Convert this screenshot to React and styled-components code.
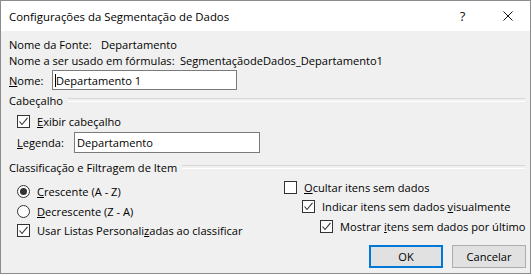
import React from "react";
import styled, { createGlobalStyle } from "styled-components";

const Global = createGlobalStyle`
  html, body { margin: 0; padding: 0; background: #ffffff; }
  body { font-family: "Open Sans", "Noto Sans", sans-serif; }
  * { box-sizing: border-box; }
`;

const Dialog = styled.div`
  width: 531px;
  height: 274px;
  border: 1px solid #8c8c8c;
  background: #f0f0f0;
  display: flex;
  flex-direction: column;
  font-family: "Open Sans", "Noto Sans", sans-serif;
  font-size: 11.1px;
  color: #000;
`;

const TitleBar = styled.div`
  height: 30px;
  background: #ffffff;
  display: flex;
  align-items: center;
  flex-shrink: 0;
`;

const Title = styled.div`
  flex: 1;
  padding-left: 8px;
  font-size: 11.4px;
  color: #000;
`;

const TitleButton = styled.div`
  width: 45px;
  height: 30px;
  display: flex;
  align-items: center;
  justify-content: center;
  font-size: 13px;
  color: #111;
`;

const Body = styled.div`
  flex: 1;
  padding: 5px 5px 0 8px;
  display: flex;
  flex-direction: column;
`;

const Row = styled.div`
  display: flex;
  align-items: center;
  height: ${(p) => p.$h || 16}px;
  margin-top: ${(p) => p.$mt || 0}px;
  padding-left: ${(p) => p.$indent || 0}px;
  white-space: nowrap;
`;

const Label = styled.span`
  display: inline-block;
  width: ${(p) => (p.$w ? `${p.$w}px` : "auto")};
  flex-shrink: 0;
`;

const Input = styled.div`
  width: ${(p) => p.$w}px;
  height: ${(p) => p.$h || 20}px;
  border: 1px solid #7a7a7a;
  background: #ffffff;
  display: flex;
  align-items: center;
  padding-left: 2px;
`;

const Caret = styled.span`
  display: inline-block;
  width: 1px;
  height: 13px;
  background: #000;
`;

const Section = styled.div`
  display: flex;
  align-items: center;
  height: 16px;
  margin-top: ${(p) => p.$mt || 0}px;
  white-space: nowrap;
  &::after {
    content: "";
    flex: 1;
    margin-left: 5px;
    height: 2px;
    border-top: 1px solid #d7d7d7;
    border-bottom: 1px solid #ffffff;
  }
`;

const Columns = styled.div`
  display: flex;
  flex: 1;
`;

const LeftCol = styled.div`
  width: 275px;
  flex-shrink: 0;
  display: flex;
  flex-direction: column;
`;

const RightCol = styled.div`
  flex: 1;
  min-width: 0;
  display: flex;
  flex-direction: column;
`;

const Box = styled.span`
  width: 13px;
  height: 13px;
  border: 1px solid #333333;
  background: #ffffff;
  display: inline-flex;
  align-items: center;
  justify-content: center;
  flex-shrink: 0;
  margin-right: 7px;
  border-radius: ${(p) => (p.$round ? "50%" : "0")};
`;

const Dot = styled.span`
  width: 7px;
  height: 7px;
  border-radius: 50%;
  background: #333333;
`;

const Buttons = styled.div`
  display: flex;
  justify-content: flex-end;
  gap: 9px;
  margin-top: 11px;
  margin-right: -1px;
`;

const Button = styled.div`
  width: 74px;
  height: 23px;
  display: flex;
  align-items: center;
  justify-content: center;
  background: #e1e1e1;
  border: ${(p) => (p.$default ? "2px solid #0078d7" : "1px solid #adadad")};
`;

const Check = ({ checked }) => (
  <Box>
    {checked && (
      <svg width="11" height="11" viewBox="0 0 11 11">
        <polyline
          points="1.5,5.5 4,8.5 9.5,1.8"
          fill="none"
          stroke="#333"
          strokeWidth="1.1"
        />
      </svg>
    )}
  </Box>
);

const Radio = ({ checked }) => <Box $round>{checked && <Dot />}</Box>;

export default function App() {
  return (
    <>
      <Global />
      <Dialog>
        <TitleBar>
          <Title>Configurações da Segmentação de Dados</Title>
          <TitleButton>?</TitleButton>
          <TitleButton>
            <svg width="10" height="10" viewBox="0 0 10 10">
              <path d="M0.5 0.5 L9.5 9.5 M9.5 0.5 L0.5 9.5" stroke="#111" strokeWidth="1" />
            </svg>
          </TitleButton>
        </TitleBar>
        <Body>
          <Row>
            <Label $w={92}>Nome da Fonte:</Label>
            <span>Departamento</span>
          </Row>
          <Row>
            <Label $w={171}>Nome a ser usado em fórmulas:</Label>
            <span>SegmentaçãodeDados_Departamento1</span>
          </Row>
          <Row $h={20} $mt={2}>
            <Label $w={43}>
              <u>N</u>ome:
            </Label>
            <Input $w={185}>
              <Caret />
              Departamento 1
            </Input>
          </Row>
          <Section $mt={2}>Cabeçalho</Section>
          <Row $mt={5} $indent={8}>
            <Check checked />
            <span>
              <u>E</u>xibir cabeçalho
            </span>
          </Row>
          <Row $h={21} $mt={3} $indent={8}>
            <Label $w={57}>
              <u>L</u>egenda:
            </Label>
            <Input $w={186} $h={21}>
              Departamento
            </Input>
          </Row>
          <Section $mt={6}>Classificação e Filtragem de Item</Section>
          <Columns>
            <LeftCol>
              <Row $mt={8} $indent={8}>
                <Radio checked />
                <span>
                  <u>C</u>rescente (A - Z)
                </span>
              </Row>
              <Row $mt={4} $indent={8}>
                <Radio />
                <span>
                  <u>D</u>ecrescente (Z - A)
                </span>
              </Row>
              <Row $mt={3} $indent={8}>
                <Check checked />
                <span>
                  Usar Listas Personali<u>z</u>adas ao classificar
                </span>
              </Row>
            </LeftCol>
            <RightCol>
              <Row $mt={4}>
                <Check />
                <span>
                  <u>O</u>cultar itens sem dados
                </span>
              </Row>
              <Row $mt={3} $indent={18}>
                <Check checked />
                <span>
                  Indicar itens sem dados <u>v</u>isualmente
                </span>
              </Row>
              <Row $mt={4} $indent={36}>
                <Check checked />
                <span>
                  Mostrar <u>i</u>tens sem dados por último
                </span>
              </Row>
              <Buttons>
                <Button $default>OK</Button>
                <Button>Cancelar</Button>
              </Buttons>
            </RightCol>
          </Columns>
        </Body>
      </Dialog>
    </>
  );
}
